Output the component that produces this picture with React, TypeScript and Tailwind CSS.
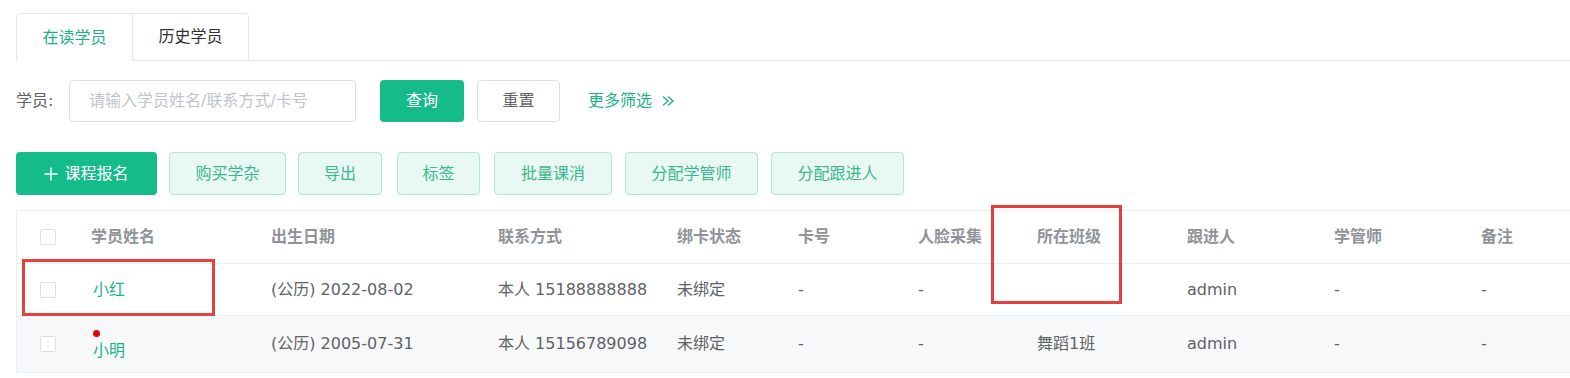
import React from "react";

const font = { fontFamily: '"DejaVu Sans", "Noto Sans CJK SC", "Noto Sans", sans-serif' };

const cols = [
  { label: "学员姓名", w: "w-[180px]" },
  { label: "出生日期", w: "w-[227px]" },
  { label: "联系方式", w: "w-[179px]" },
  { label: "绑卡状态", w: "w-[121px]" },
  { label: "卡号", w: "w-[120px]" },
  { label: "人脸采集", w: "w-[119px]" },
  { label: "所在班级", w: "w-[150px]" },
  { label: "跟进人", w: "w-[147px]" },
  { label: "学管师", w: "w-[147px]" },
  { label: "备注", w: "flex-1" },
];

function Checkbox() {
  return <span className="block w-[16px] h-[16px] border border-[#dcdfe6] rounded-[2px] bg-white" />;
}

function Row({ cells, bg, h, dot }: { cells: string[]; bg: string; h: string; dot?: boolean }) {
  return (
    <div className={`flex items-center border-t border-[#ebeef5] ${bg} ${h}`}>
      <div className="w-[58px] shrink-0 pl-[23px]">
        <Checkbox />
      </div>
      {cols.map((c, i) => (
        <div key={i} className={`${c.w} shrink-0 pl-[16px] text-[16px] ${i === 0 ? "text-[#1cb287]" : "text-[#606266]"}`}>
          {i === 0 && dot ? (
            <div className="flex flex-col">
              <span className="block w-[7px] h-[7px] rounded-full bg-[#e60012] ml-[2px] mt-[4px] mb-[3px]" />
              <span className="pl-[2px] leading-[22px]">{cells[i]}</span>
            </div>
          ) : (
            <span className={i === 0 ? "pl-[2px]" : ""}>{cells[i]}</span>
          )}
        </div>
      ))}
    </div>
  );
}

export default function App() {
  const lightBtn =
    "h-[43px] rounded-[4px] border border-[#b4e6d5] bg-[#e8f8f2] text-[#3db68f] text-[16px] flex items-center justify-center";
  return (
    <div className="w-[1570px] h-[378px] bg-white overflow-hidden relative" style={font}>
      {/* tabs */}
      <div className="flex pt-[13px] pl-[16px]">
        <div className="w-[117px] h-[48px] border border-b-0 border-[#e4e7ed] rounded-tl-[4px] flex items-center justify-center text-[16px] text-[#1cb287] bg-white">
          在读学员
        </div>
        <div className="w-[116px] h-[48px] border border-l-0 border-[#e4e7ed] rounded-tr-[4px] flex items-center justify-center text-[16px] text-[#303133]">
          历史学员
        </div>
        <div className="flex-1 border-b border-[#e4e7ed]" />
      </div>

      {/* search */}
      <div className="flex items-center mt-[19px] pl-[16px] h-[42px]">
        <span className="text-[16px] text-[#606266] w-[53px]">学员:</span>
        <div className="w-[287px] h-[42px] border border-[#dcdfe6] rounded-[4px] flex items-center pl-[19px] text-[16px] text-[#c0c4cc]">
          请输入学员姓名/联系方式/卡号
        </div>
        <button className="ml-[24px] w-[84px] h-[42px] rounded-[4px] bg-[#16bb8a] text-white text-[16px]">查询</button>
        <button className="ml-[13px] w-[83px] h-[42px] rounded-[4px] border border-[#dcdfe6] text-[#606266] text-[16px]">重置</button>
        <span className="ml-[28px] text-[16px] text-[#1cb287] flex items-center">
          更多筛选
          <svg width="14" height="14" viewBox="0 0 14 14" className="ml-[9px]" fill="none" stroke="#1cb287" strokeWidth="1.3">
            <path d="M2 2.5 L7 7 L2 11.5" />
            <path d="M7 2.5 L12 7 L7 11.5" />
          </svg>
        </span>
      </div>

      {/* action buttons */}
      <div className="flex items-center mt-[30px] pl-[16px]">
        <button className="w-[141px] h-[43px] rounded-[4px] bg-[#16bb8a] text-white text-[16px] flex items-center justify-center gap-[6px]">
          <svg width="14" height="14" viewBox="0 0 14 14" stroke="white" strokeWidth="1.4">
            <path d="M7 0.5 V13.5 M0.5 7 H13.5" />
          </svg>
          课程报名
        </button>
        <button className={`${lightBtn} ml-[12px] w-[117px]`}>购买学杂</button>
        <button className={`${lightBtn} ml-[12px] w-[84px]`}>导出</button>
        <button className={`${lightBtn} ml-[15px] w-[83px]`}>标签</button>
        <button className={`${lightBtn} ml-[14px] w-[118px]`}>批量课消</button>
        <button className={`${lightBtn} ml-[13px] w-[133px]`}>分配学管师</button>
        <button className={`${lightBtn} ml-[13px] w-[133px]`}>分配跟进人</button>
      </div>

      {/* table */}
      <div className="mt-[15px] ml-[16px] border-l border-b border-[#ebeef5]">
        <div className="flex items-center h-[53px] border-t border-[#ebeef5] bg-white">
          <div className="w-[58px] shrink-0 pl-[23px]">
            <Checkbox />
          </div>
          {cols.map((c, i) => (
            <div key={i} className={`${c.w} shrink-0 pl-[16px] text-[16px] font-bold text-[#909399]`}>
              {c.label}
            </div>
          ))}
        </div>
        <Row
          h="h-[52px]"
          bg="bg-white"
          cells={["小红", "(公历) 2022-08-02", "本人 15188888888", "未绑定", "-", "-", "", "admin", "-", "-"]}
        />
        <Row
          h="h-[57px]"
          bg="bg-[#f7f8fa]"
          dot
          cells={["小明", "(公历) 2005-07-31", "本人 15156789098", "未绑定", "-", "-", "舞蹈1班", "admin", "-", "-"]}
        />
      </div>

      {/* annotation boxes */}
      <div className="absolute left-[22px] top-[259px] w-[193px] h-[57px] border-[3px] border-[#e5403e]" />
      <div className="absolute left-[991px] top-[205px] w-[131px] h-[99px] border-[3px] border-[#e5403e]" />
    </div>
  );
}
